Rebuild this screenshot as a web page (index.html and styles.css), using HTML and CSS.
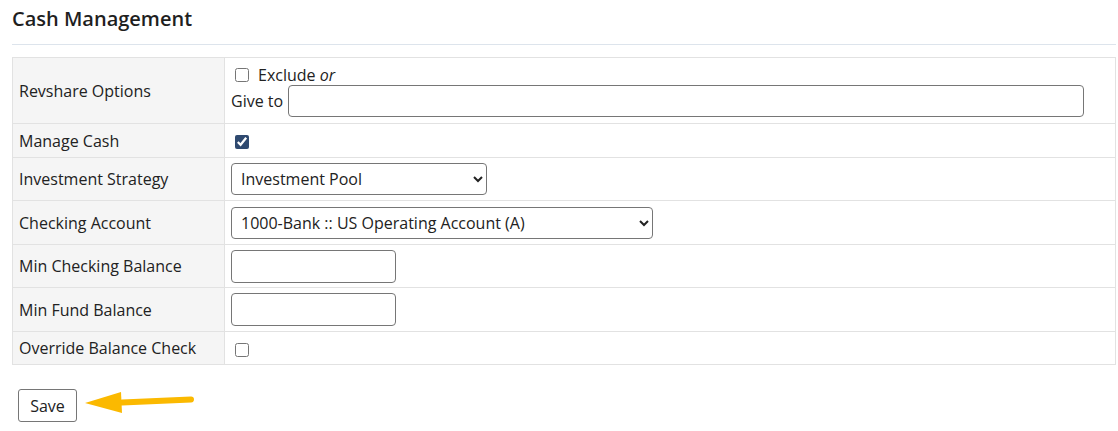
FILE: index.html
```html
<!DOCTYPE html>
<html>
    <head>
        <title>Cash Management</title>
        <link rel="stylesheet" href="styles.css">
    </head>
    <body>
        <h3 class="pageTitle">Cash Management</h3>
        <table class="formTable">
            <tr class="rowRevshare">
                <th>Revshare Options</th>
                <td>
                    <label class="checkLine"><input type="checkbox"><span>Exclude <i>or</i></span></label>
                    <div class="giveTo">Give to <input type="text" class="wideInput"></div>
                </td>
            </tr>
            <tr class="rowCheck">
                <th>Manage Cash</th>
                <td><input type="checkbox" checked></td>
            </tr>
            <tr>
                <th>Investment Strategy</th>
                <td>
                    <select class="selStrategy">
                        <option>Investment Pool</option>
                    </select>
                </td>
            </tr>
            <tr class="rowTall">
                <th>Checking Account</th>
                <td>
                    <select class="selAccount">
                        <option>1000-Bank :: US Operating Account (A)</option>
                    </select>
                </td>
            </tr>
            <tr>
                <th>Min Checking Balance</th>
                <td><input type="text" class="smallInput"></td>
            </tr>
            <tr class="rowTall">
                <th>Min Fund Balance</th>
                <td><input type="text" class="smallInput"></td>
            </tr>
            <tr class="rowCheck rowLast">
                <th>Override Balance Check</th>
                <td><input type="checkbox"></td>
            </tr>
        </table>
        <div class="actions">
            <button class="saveBtn">Save</button>
            <svg class="arrow" width="112" height="26" viewBox="0 0 112 26">
                <path d="M38 13.5 L107 10.5" stroke="#fbb900" stroke-width="6" stroke-linecap="round" fill="none"/>
                <polygon points="1,14 37,3 38,24" fill="#fbb900"/>
            </svg>
        </div>
    </body>
</html>
```

FILE: styles.css
```css
body{
    margin: 0;
    padding: 0 2px 0 12px;
    font-family: "Open Sans", sans-serif;
    font-size: 16px;
    color: #222;
    background: #ffffff;
}
.pageTitle{
    margin: 0;
    padding: 5px 0 12px 0;
    font-size: 20px;
    font-weight: 600;
    color: #1f1f1f;
    border-bottom: 1px solid #dde4ec;
}
.formTable{
    width: 100%;
    margin-top: 12px;
    border-collapse: collapse;
    border: 1px solid #e2e2e2;
}
.formTable th,
.formTable td{
    border: 1px solid #e2e2e2;
    height: 43px;
    padding: 0 6px;
    box-sizing: border-box;
    vertical-align: middle;
}
.formTable th{
    width: 212px;
    padding-left: 6px;
    text-align: left;
    font-weight: normal;
    background: #f5f5f5;
}
.formTable tr.rowTall th,
.formTable tr.rowTall td{
    height: 44px;
}
.formTable tr.rowCheck th,
.formTable tr.rowCheck td{
    height: 34px;
}
.formTable tr.rowLast th,
.formTable tr.rowLast td{
    height: 33px;
}
.formTable tr.rowRevshare th,
.formTable tr.rowRevshare td{
    height: 66px;
}
.checkLine{
    display: flex;
    align-items: center;
    gap: 9px;
    padding-left: 4px;
    line-height: 20px;
}
.giveTo{
    display: flex;
    align-items: center;
    gap: 5px;
}
input[type=checkbox]{
    width: 14px;
    height: 14px;
    margin: 0 0 0 4px;
    accent-color: #2f4a70;
    vertical-align: middle;
}
.checkLine input[type=checkbox]{
    margin: 0;
}
input[type=text], select{
    font-family: inherit;
    font-size: 16px;
    color: #222;
    border: 1px solid #767676;
    border-radius: 4px;
    box-sizing: border-box;
    background: #fff;
}
.wideInput{
    width: 796px;
    height: 32px;
}
.smallInput{
    width: 165px;
    height: 33px;
}
select{
    height: 32px;
    padding: 0 5px;
}
.selStrategy{
    width: 256px;
}
.selAccount{
    width: 422px;
}
.actions{
    position: relative;
    padding: 24px 0 0 6px;
}
.saveBtn{
    font-family: inherit;
    font-size: 16px;
    color: #222;
    background: #fff;
    border: 1px solid #767676;
    border-radius: 3px;
    height: 33px;
    width: 59px;
    padding: 0;
}
.arrow{
    position: absolute;
    left: 72px;
    top: 24px;
}
```
